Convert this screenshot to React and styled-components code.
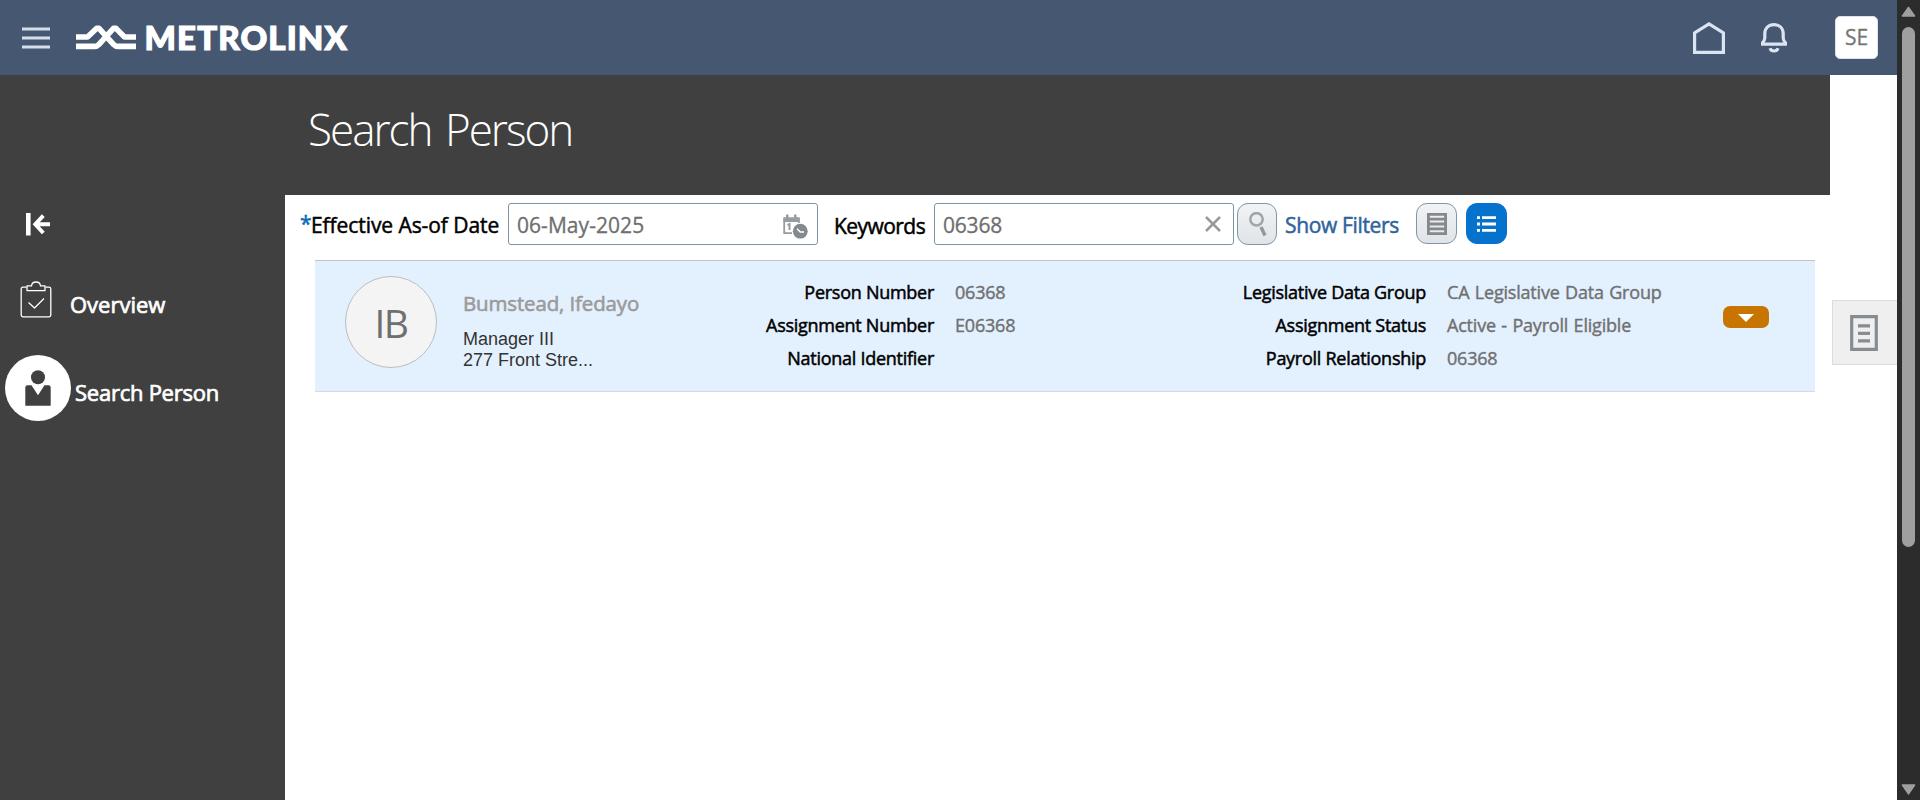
import React from 'react';
import styled, { createGlobalStyle, css } from 'styled-components';

const GlobalStyle = createGlobalStyle`
  *, *::before, *::after { box-sizing: border-box; }
  html, body { margin: 0; height: 100%; overflow: hidden; background: #fff; }
  body { font-family: "Open Sans", "Noto Sans", sans-serif; color: #000; }
  button, input { font-family: inherit; margin: 0; }
  button { padding: 0; border: 0; background: none; cursor: pointer; }
  svg { display: block; flex: none; }
`;

const medium = css`
  font-weight: 400;
  -webkit-text-stroke: 0.5px currentColor;
`;

const Window = styled.div`
  display: flex;
  width: 1920px;
  height: 800px;
`;

const Page = styled.div`
  display: flex;
  flex-direction: column;
  width: 1897px;
`;

const Header = styled.header`
  display: flex;
  align-items: flex-start;
  height: 75px;
  padding-left: 22px;
  background: #465771;
`;

const MenuButton = styled.button`
  margin: 27px 26px 0 0;
`;

const Brand = styled.a`
  display: flex;
  align-items: flex-start;
  color: #fff;
`;

const BrandMark = styled.svg`
  margin-top: 25px;
`;

const BrandName = styled.span`
  margin: 17px 0 0 8.5px;
  font: 900 33px/40px Lato, sans-serif;
  letter-spacing: 1.15px;
  -webkit-text-stroke: 1.2px #fff;
`;

const HeaderActions = styled.div`
  display: flex;
  align-items: flex-start;
  margin-left: auto;
  padding-right: 19px;
`;

const HomeButton = styled.button`
  margin: 22px 36px 0 0;
`;

const BellButton = styled.button`
  margin: 23px 48px 0 0;
`;

const UserBadge = styled.button`
  width: 43px;
  height: 43px;
  margin-top: 16px;
  border: 1px solid #dbe3ee;
  border-radius: 5px;
  background: #fff;
  color: #757575;
  font-size: 21px;
  line-height: 39px;
  -webkit-text-stroke: 0.3px currentColor;
`;

const Body = styled.div`
  display: flex;
  flex: 1;
`;

const Sidebar = styled.nav`
  width: 285px;
  padding-top: 138px;
  background: #404040;
`;

const CollapseButton = styled.button`
  display: block;
  margin-left: 26px;
`;

const NavItem = styled.a`
  display: flex;
  align-items: center;
  height: ${p => p.$height}px;
  margin: ${p => p.$top}px 0 0 ${p => p.$indent}px;
  color: #fff;
`;

const NavLabel = styled.span`
  ${medium}
  -webkit-text-stroke-width: 0.7px;
  font-size: 22px;
  line-height: 30px;
  letter-spacing: ${p => p.$track}px;
  padding-top: ${p => p.$drop}px;
  margin-left: ${p => p.$gap}px;
`;

const SelectedDisc = styled.span`
  display: flex;
  align-items: center;
  justify-content: center;
  width: 66px;
  height: 66px;
  border-radius: 50%;
  background: #fff;
`;

const Content = styled.main`
  flex: 1;
  display: flex;
  flex-direction: column;
`;

const TitleBar = styled.div`
  width: 1545px;
  height: 120px;
  padding: 24px 0 0 23px;
  background: #404040;
`;

const Title = styled.h1`
  margin: 0;
  color: #fff;
  font-size: 44px;
  font-weight: 300;
  line-height: 61px;
  letter-spacing: -2px;
  word-spacing: 4px;
`;

const Toolbar = styled.form`
  display: flex;
  align-items: flex-start;
  height: 65px;
  padding: 8px 0 0 15px;
`;

const FieldLabel = styled.label`
  ${medium}
  display: flex;
  width: ${p => p.$width}px;
  padding-top: ${p => p.$drop}px;
  font-size: 21px;
  line-height: 42px;
  letter-spacing: ${p => p.$track}px;
  white-space: nowrap;
`;

const Required = styled.span`
  width: 11px;
  color: #0a6cb8;
  letter-spacing: 0;
  margin-top: -2px;
`;

const Field = styled.div`
  display: flex;
  align-items: flex-start;
  width: ${p => p.$width}px;
  height: 42px;
  margin-right: ${p => p.$after}px;
  border: 1px solid #7e93a3;
  border-radius: 3px;
  background: #fff;
`;

const Input = styled.input`
  flex: 1;
  min-width: 0;
  height: 42px;
  padding: 0 0 0 8px;
  border: 0;
  outline: 0;
  background: transparent;
  color: #6f6f6f;
  font-size: 21px;
  letter-spacing: ${p => p.$track}px;
  -webkit-text-stroke: 0.3px currentColor;
`;

const FieldIcon = styled.span`
  padding-top: ${p => p.$top}px;
  padding-right: ${p => p.$right}px;
`;

const ToolButton = styled.button`
  display: flex;
  align-items: center;
  justify-content: center;
  width: ${p => p.$width}px;
  height: ${p => p.$height}px;
  border: 1px solid ${p => (p.$active ? '#0572ce' : '#7f95a8')};
  border-radius: 11px;
  background: ${p => (p.$active ? '#0572ce' : 'linear-gradient(#f1f3f5, #e0e4e8)')};
`;

const ShowFilters = styled.a`
  ${medium}
  width: 124px;
  margin: 1px 0 0 7px;
  padding-left: 1px;
  color: #2f639c;
  font-size: 21px;
  line-height: 42px;
  letter-spacing: -0.35px;
  white-space: nowrap;
`;

const ViewToggle = styled.div`
  display: flex;
  gap: 9px;
  margin-left: 8px;
`;

const Results = styled.div`
  display: flex;
  align-items: flex-start;
  padding-left: 30px;
`;

const PersonRow = styled.article`
  display: flex;
  align-items: flex-start;
  width: 1500px;
  height: 132px;
  padding-left: 30px;
  border-top: 1px solid #c4c4c4;
  border-bottom: 1px solid #d6dade;
  background: #e3f1ff;
`;

const Initials = styled.div`
  width: 92px;
  height: 92px;
  margin-top: 15px;
  border: 1px solid #bdbdbd;
  border-radius: 50%;
  background: #f4f4f4;
  color: #6f6f6f;
  font-size: 39px;
  line-height: 92px;
  letter-spacing: -1.5px;
  text-align: center;
`;

const Identity = styled.div`
  width: 290px;
  padding: 28px 0 0 26px;
`;

const PersonName = styled.div`
  ${medium}
  -webkit-text-stroke-width: 0.6px;
  color: #9b9b9b;
  font-size: 20.5px;
  line-height: 29px;
  letter-spacing: -0.15px;
`;

const JobLine = styled.div`
  color: #333;
  font: 18px/21px "Liberation Sans", Arial, sans-serif;
`;

const JobInfo = styled.div`
  margin-top: 11px;
`;

const Details = styled.dl`
  display: grid;
  grid-template-columns: ${p => p.$labelWidth}px ${p => p.$valueWidth}px;
  grid-auto-rows: 33px;
  column-gap: 21px;
  margin: 15px 0 0;
  font-size: 18px;
  line-height: 33px;
  white-space: nowrap;
`;

const DetailLabel = styled.dt`
  ${medium}
  text-align: right;
  letter-spacing: -0.27px;
`;

const DetailValue = styled.dd`
  margin: 0;
  color: #707070;
  -webkit-text-stroke: 0.4px currentColor;
  letter-spacing: -0.2px;
  word-spacing: 1px;
`;

const ActionsButton = styled.button`
  display: flex;
  justify-content: center;
  width: 46px;
  height: 22px;
  margin-top: 45px;
  padding-top: 8px;
  border-radius: 7px;
  background: #c77400;
`;

const DrawerTab = styled.button`
  display: flex;
  align-items: center;
  justify-content: center;
  width: 65px;
  height: 65px;
  margin: 40px 0 0 17px;
  padding-right: 2px;
  border: 1px solid #d5dde5;
  border-right: 0;
  background: #efefef;
`;

const ScrollTrack = styled.div`
  display: flex;
  flex-direction: column;
  align-items: center;
  width: 23px;
  padding: 6px 0 5px;
  background: #2c2c2c;
`;

const ScrollThumb = styled.div`
  width: 13px;
  height: 520px;
  margin: 10px 0 auto;
  border-radius: 7px;
  background: #9f9f9f;
`;

const ScrollArrow = ({ down }) => (
  <svg width="15" height="11" viewBox="0 0 15 11">
    <path
      d={down ? 'M1.5 1H13.5L7.5 9.8Z' : 'M1.5 10H13.5L7.5 1.5Z'}
      fill="#9f9f9f" stroke="#9f9f9f" strokeWidth="1.6" strokeLinejoin="round"
    />
  </svg>
);

const MenuIcon = () => (
  <svg width="28" height="22" viewBox="0 0 28 22" stroke="#d5deeb" strokeWidth="3">
    <path d="M0 2H28M0 11H28M0 20H28" />
  </svg>
);

const HomeIcon = () => (
  <svg width="32" height="32" viewBox="0 0 32 32" fill="none" stroke="#dbe4f0" strokeWidth="3.2">
    <path d="M1.6 30.3V10.8L16 2L30.4 10.8V30.3Z" />
  </svg>
);

const BellIcon = () => (
  <svg width="26" height="30" viewBox="0 0 26 30" fill="none" stroke="#dbe4f0">
    <path d="M1.5 21.2V19.8Q3.6 18.2 3.8 15V11C3.8 5.2 7.6 1.7 13 1.7S22.2 5.2 22.2 11V15Q22.4 18.2 24.5 19.8V21.2Z" strokeWidth="3.2" />
    <path d="M9 25.2Q10 28 13 28T17 25.2" strokeWidth="3.2" />
  </svg>
);

const CollapseIcon = () => (
  <svg width="25" height="23" viewBox="0 0 25 23" fill="none" stroke="#fff">
    <path d="M2.3 0V22.5" strokeWidth="4.6" />
    <path d="M24 11.3H10M17.3 2.6L9.3 11.3L17.3 20" strokeWidth="3.9" />
  </svg>
);

const ClipboardIcon = () => (
  <svg width="32" height="37" viewBox="0 0 32 37" fill="none" stroke="#fff" strokeWidth="1.3" strokeLinejoin="round">
    <path d="M6.5 6.2H3Q1.2 6.2 1.2 8V34Q1.2 35.8 3 35.8H29Q30.8 35.8 30.8 34V8Q30.8 6.2 29 6.2H25.5" />
    <path d="M7 4.8H11.5Q12 1 16 1T20.5 4.8H25V9.7H7Z" />
    <path d="M8.5 21.5L14.5 27L24 17.5" strokeWidth="1.2" />
  </svg>
);

const PersonIcon = () => (
  <svg width="26" height="36" viewBox="0 0 26 36" fill="#404040">
    <circle cx="13" cy="7.2" r="7" />
    <path d="M2.5 15.2H6.5L13 25.2L19.5 15.2H23.5Q25.7 15.2 25.7 17.4V35.7H.3V17.4Q.3 15.2 2.5 15.2Z" />
  </svg>
);

const CalendarClockIcon = () => (
  <svg width="25" height="25" viewBox="0 0 25 25" fill="none">
    <path d="M1.2 4V19.2H9M1.2 4.8H15.8V9" stroke="#989c9f" strokeWidth="1.8" />
    <path d="M.5 3.2H16.7V8H.5ZM3 .5H5.5V5H3ZM11 .5H13.5V5H11Z" fill="#989c9f" />
    <path d="M4.5 11L6.5 10V16" stroke="#989c9f" strokeWidth="2" />
    <circle cx="17.3" cy="17.2" r="7.4" fill="#84898d" />
    <path d="M14 14.8L17.3 18H21" stroke="#fff" strokeWidth="1.6" />
  </svg>
);

const ClearIcon = () => (
  <svg width="16" height="16" viewBox="0 0 16 16" stroke="#969a9d" strokeWidth="2.5">
    <path d="M1 1L15 15M15 1L1 15" />
  </svg>
);

const SearchIcon = () => (
  <svg width="19" height="25" viewBox="0 0 19 25" fill="none" stroke="#a1a5a8">
    <circle cx="8.5" cy="7.3" r="6.2" strokeWidth="2.6" />
    <path d="M13 15L17 23.5" strokeWidth="3.4" stroke="#93979a" />
  </svg>
);

const TableIcon = () => (
  <svg width="20" height="22" viewBox="0 0 20 22" fill="none" stroke="#85898c" strokeWidth="2.8">
    <path d="M1.4 1.4H18.6V20.6H1.4ZM1 6.2H19M1 11H19M1 15.8H19" />
  </svg>
);

const ListIcon = () => (
  <svg width="19" height="16" viewBox="0 0 19 16" stroke="#fff" strokeWidth="2.8">
    <path d="M0 1.6H3M5 1.6H19M0 8H3M5 8H19M0 14.4H3M5 14.4H19" />
  </svg>
);

const DocumentIcon = () => (
  <svg width="28" height="36" viewBox="0 0 28 36" fill="none" stroke="#868c90" strokeWidth="3.2">
    <path d="M1.7 1.7H26.3V34.3H1.7Z" />
    <path d="M8 10.8H20M8 18.3H20M8 25.8H20" />
  </svg>
);

const MetrolinxMark = () => (
  <BrandMark width="60" height="25" viewBox="0 0 60 25" fill="none" stroke="#fff" strokeWidth="5.6" strokeLinejoin="round">
    <path d="M0 12H11.5L20.5 3.4H23L37.5 19.3Q39.5 21.4 42 21.4H60" />
    <path d="M60 12H48.5L40 3.4H37.5L23 19.3Q21 21.4 18.5 21.4H0" />
  </BrandMark>
);

const employment = [
  ['Person Number', '06368'],
  ['Assignment Number', 'E06368'],
  ['National Identifier', ''],
];

const payroll = [
  ['Legislative Data Group', 'CA Legislative Data Group'],
  ['Assignment Status', 'Active - Payroll Eligible'],
  ['Payroll Relationship', '06368'],
];

const DetailList = ({ rows, labelWidth, valueWidth }) => (
  <Details $labelWidth={labelWidth} $valueWidth={valueWidth}>
    {rows.map(([label, value]) => (
      <React.Fragment key={label}>
        <DetailLabel>{label}</DetailLabel>
        <DetailValue>{value}</DetailValue>
      </React.Fragment>
    ))}
  </Details>
);

export default function App() {
  return (
    <Window>
      <GlobalStyle />
      <Page>
        <Header>
          <MenuButton><MenuIcon /></MenuButton>
          <Brand>
            <MetrolinxMark />
            <BrandName>METROLINX</BrandName>
          </Brand>
          <HeaderActions>
            <HomeButton><HomeIcon /></HomeButton>
            <BellButton><BellIcon /></BellButton>
            <UserBadge>SE</UserBadge>
          </HeaderActions>
        </Header>
        <Body>
          <Sidebar>
            <CollapseButton><CollapseIcon /></CollapseButton>
            <NavItem $top={45} $height={36} $indent={20}>
              <ClipboardIcon />
              <NavLabel $gap={18} $drop={10} $track={0}>Overview</NavLabel>
            </NavItem>
            <NavItem $top={38} $height={66} $indent={5}>
              <SelectedDisc><PersonIcon /></SelectedDisc>
              <NavLabel $gap={4} $drop={8} $track={-0.25}>Search Person</NavLabel>
            </NavItem>
          </Sidebar>
          <Content>
            <TitleBar><Title>Search Person</Title></TitleBar>
            <Toolbar>
              <FieldLabel $width={208} $drop={1} $track={-0.07}><Required>*</Required>Effective As-of Date</FieldLabel>
              <Field $width={310} $after={16}>
                <Input defaultValue="06-May-2025" $track={0.05} />
                <FieldIcon $top={10} $right={9}><CalendarClockIcon /></FieldIcon>
              </Field>
              <FieldLabel $width={100} $drop={2} $track={-0.55}>Keywords</FieldLabel>
              <Field $width={300} $after={3}>
                <Input defaultValue="06368" $track={-0.2} />
                <FieldIcon $top={12} $right={12}><ClearIcon /></FieldIcon>
              </Field>
              <ToolButton type="button" $width={40} $height={42}><SearchIcon /></ToolButton>
              <ShowFilters>Show Filters</ShowFilters>
              <ViewToggle>
                <ToolButton type="button" $width={41} $height={41}><TableIcon /></ToolButton>
                <ToolButton type="button" $width={41} $height={41} $active><ListIcon /></ToolButton>
              </ViewToggle>
            </Toolbar>
            <Results>
              <PersonRow>
                <Initials>IB</Initials>
                <Identity>
                  <PersonName>Bumstead, Ifedayo</PersonName>
                  <JobInfo>
                    <JobLine>Manager III</JobLine>
                    <JobLine>277 Front Stre...</JobLine>
                  </JobInfo>
                </Identity>
                <DetailList rows={employment} labelWidth={207} valueWidth={265} />
                <DetailList rows={payroll} labelWidth={206} valueWidth={276} />
                <ActionsButton>
                  <svg width="16" height="8" viewBox="0 0 16 8"><path d="M0 0H16L8 8Z" fill="#fff" /></svg>
                </ActionsButton>
              </PersonRow>
              <DrawerTab><DocumentIcon /></DrawerTab>
            </Results>
          </Content>
        </Body>
      </Page>
      <ScrollTrack>
        <ScrollArrow />
        <ScrollThumb />
        <ScrollArrow down />
      </ScrollTrack>
    </Window>
  );
}
